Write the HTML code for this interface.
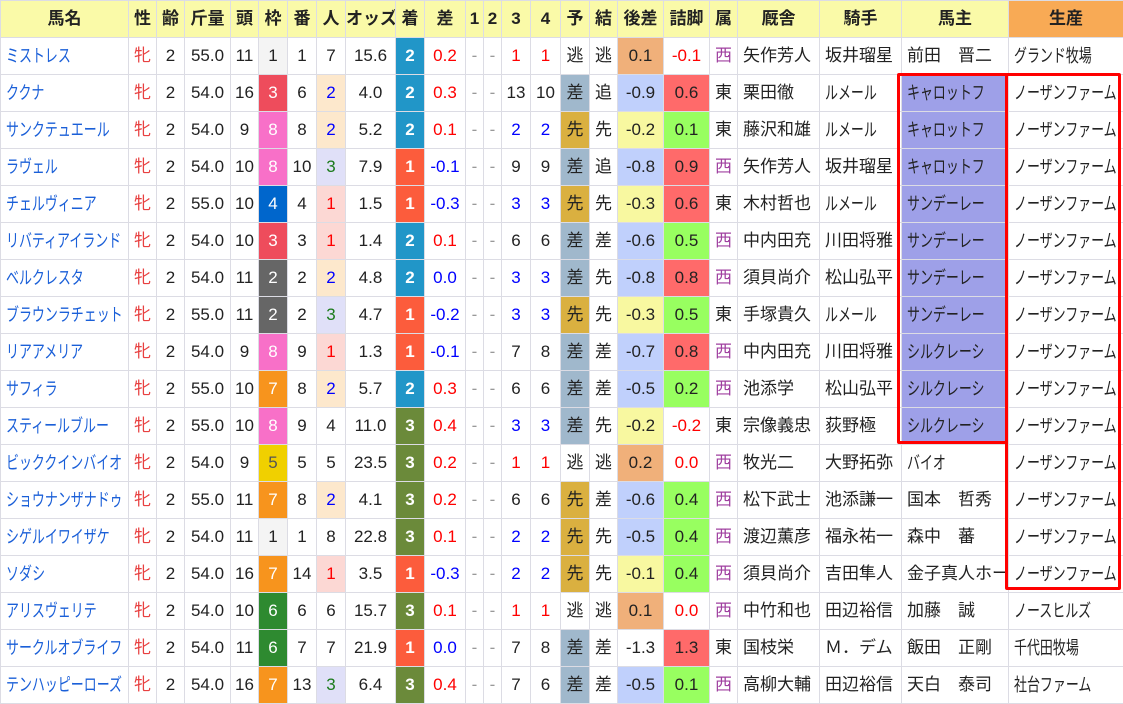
<!DOCTYPE html>
<html><head><meta charset="utf-8"><style>
body{margin:0;background:#fff;width:1123px;height:703px;overflow:hidden;position:relative}
table{border-collapse:collapse;table-layout:fixed;width:1123px;font-family:"Liberation Sans","Noto Sans CJK JP",sans-serif;font-size:17px;color:#222}
td,th{border:1px solid #dcdce4;height:36px;padding:0;text-align:center;white-space:nowrap;overflow:hidden;line-height:20px}
th{background:#fafaa8;font-weight:bold}
th.sp{background:#f8aa55}
td.l{text-align:left;padding-left:5px}
td.n{color:#1a5fd8}
td.l span{display:inline-block;transform:scaleX(.72);transform-origin:0 50%;font-size:18px}
.f{color:#e84040}
.r{color:#f00}.b{color:#00f}.g{color:#1a7a1a}.d{color:#999}
.w1{background:#f4f4f4}.w2{background:#666;color:#fff}.w3{background:#ee4c5c;color:#fff}.w4{background:#0066cc;color:#fff}.w5{background:#f0d000;color:#555}.w6{background:#2e8a30;color:#fff}.w7{background:#f7941d;color:#fff}.w8{background:#f870c8;color:#fff}
.p1{background:#fcd8d4;color:#f00}.p2{background:#fde8cc;color:#00f}.p3{background:#e0e0f8;color:#1a7a1a}
.c1{background:#fc5c3c;color:#fff;font-weight:bold}.c2{background:#2196c8;color:#fff;font-weight:bold}.c3{background:#6b8a3a;color:#fff;font-weight:bold}
.ys{background:#a0b8cc}.ys2{background:#dab040}
.ao{background:#f0b07a}.ab{background:#c0d0fc}.ay{background:#f8f8a0}
.tr{background:#ff6a6a}.tg{background:#98ff60}
.w{color:#a040a0}
.o{background:#9ea0e8}
.box{position:absolute;border:3px solid #f00;box-sizing:border-box;border-radius:2px}
</style></head><body>
<table>
<colgroup><col style="width:128px"><col style="width:28px"><col style="width:28px"><col style="width:46px"><col style="width:28px"><col style="width:29px"><col style="width:29px"><col style="width:29px"><col style="width:50px"><col style="width:29px"><col style="width:41px"><col style="width:18px"><col style="width:18px"><col style="width:29px"><col style="width:30px"><col style="width:29px"><col style="width:28px"><col style="width:46px"><col style="width:46px"><col style="width:28px"><col style="width:82px"><col style="width:82px"><col style="width:107px"><col style="width:115px"></colgroup>
<tr><th>馬名</th><th>性</th><th>齢</th><th>斤量</th><th>頭</th><th>枠</th><th>番</th><th>人</th><th>オッズ</th><th>着</th><th>差</th><th>1</th><th>2</th><th>3</th><th>4</th><th>予</th><th>結</th><th>後差</th><th>詰脚</th><th>属</th><th>厩舎</th><th>騎手</th><th>馬主</th><th class="sp">生産</th></tr>
<tr><td class="l n"><span>ミストレス</span></td><td class="f">牝</td><td>2</td><td>55.0</td><td>11</td><td class="w1">1</td><td>1</td><td>7</td><td>15.6</td><td class="c2">2</td><td class="r">0.2</td><td class="d">-</td><td class="d">-</td><td class="r">1</td><td class="r">1</td><td>逃</td><td>逃</td><td class="ao">0.1</td><td class="r">-0.1</td><td class="w">西</td><td class="l">矢作芳人</td><td class="l">坂井瑠星</td><td class="l">前田　晋二</td><td class="l"><span>グランド牧場</span></td></tr>
<tr><td class="l n"><span>ククナ</span></td><td class="f">牝</td><td>2</td><td>54.0</td><td>16</td><td class="w3">3</td><td>6</td><td class="p2">2</td><td>4.0</td><td class="c2">2</td><td class="r">0.3</td><td class="d">-</td><td class="d">-</td><td>13</td><td>10</td><td class="ys">差</td><td>追</td><td class="ab">-0.9</td><td class="tr">0.6</td><td>東</td><td class="l">栗田徹</td><td class="l"><span>ルメール</span></td><td class="l o"><span>キャロットフ</span></td><td class="l"><span>ノーザンファーム</span></td></tr>
<tr><td class="l n"><span>サンクテュエール</span></td><td class="f">牝</td><td>2</td><td>54.0</td><td>9</td><td class="w8">8</td><td>8</td><td class="p2">2</td><td>5.2</td><td class="c2">2</td><td class="r">0.1</td><td class="d">-</td><td class="d">-</td><td class="b">2</td><td class="b">2</td><td class="ys2">先</td><td>先</td><td class="ay">-0.2</td><td class="tg">0.1</td><td>東</td><td class="l">藤沢和雄</td><td class="l"><span>ルメール</span></td><td class="l o"><span>キャロットフ</span></td><td class="l"><span>ノーザンファーム</span></td></tr>
<tr><td class="l n"><span>ラヴェル</span></td><td class="f">牝</td><td>2</td><td>54.0</td><td>10</td><td class="w8">8</td><td>10</td><td class="p3">3</td><td>7.9</td><td class="c1">1</td><td class="b">-0.1</td><td class="d">-</td><td class="d">-</td><td>9</td><td>9</td><td class="ys">差</td><td>追</td><td class="ab">-0.8</td><td class="tr">0.9</td><td class="w">西</td><td class="l">矢作芳人</td><td class="l">坂井瑠星</td><td class="l o"><span>キャロットフ</span></td><td class="l"><span>ノーザンファーム</span></td></tr>
<tr><td class="l n"><span>チェルヴィニア</span></td><td class="f">牝</td><td>2</td><td>55.0</td><td>10</td><td class="w4">4</td><td>4</td><td class="p1">1</td><td>1.5</td><td class="c1">1</td><td class="b">-0.3</td><td class="d">-</td><td class="d">-</td><td class="b">3</td><td class="b">3</td><td class="ys2">先</td><td>先</td><td class="ay">-0.3</td><td class="tr">0.6</td><td>東</td><td class="l">木村哲也</td><td class="l"><span>ルメール</span></td><td class="l o"><span>サンデーレー</span></td><td class="l"><span>ノーザンファーム</span></td></tr>
<tr><td class="l n"><span>リバティアイランド</span></td><td class="f">牝</td><td>2</td><td>54.0</td><td>10</td><td class="w3">3</td><td>3</td><td class="p1">1</td><td>1.4</td><td class="c2">2</td><td class="r">0.1</td><td class="d">-</td><td class="d">-</td><td>6</td><td>6</td><td class="ys">差</td><td>差</td><td class="ab">-0.6</td><td class="tg">0.5</td><td class="w">西</td><td class="l">中内田充</td><td class="l">川田将雅</td><td class="l o"><span>サンデーレー</span></td><td class="l"><span>ノーザンファーム</span></td></tr>
<tr><td class="l n"><span>ベルクレスタ</span></td><td class="f">牝</td><td>2</td><td>54.0</td><td>11</td><td class="w2">2</td><td>2</td><td class="p2">2</td><td>4.8</td><td class="c2">2</td><td class="b">0.0</td><td class="d">-</td><td class="d">-</td><td class="b">3</td><td class="b">3</td><td class="ys">差</td><td>先</td><td class="ab">-0.8</td><td class="tr">0.8</td><td class="w">西</td><td class="l">須貝尚介</td><td class="l">松山弘平</td><td class="l o"><span>サンデーレー</span></td><td class="l"><span>ノーザンファーム</span></td></tr>
<tr><td class="l n"><span>ブラウンラチェット</span></td><td class="f">牝</td><td>2</td><td>55.0</td><td>11</td><td class="w2">2</td><td>2</td><td class="p3">3</td><td>4.7</td><td class="c1">1</td><td class="b">-0.2</td><td class="d">-</td><td class="d">-</td><td class="b">3</td><td class="b">3</td><td class="ys2">先</td><td>先</td><td class="ay">-0.3</td><td class="tg">0.5</td><td>東</td><td class="l">手塚貴久</td><td class="l"><span>ルメール</span></td><td class="l o"><span>サンデーレー</span></td><td class="l"><span>ノーザンファーム</span></td></tr>
<tr><td class="l n"><span>リアアメリア</span></td><td class="f">牝</td><td>2</td><td>54.0</td><td>9</td><td class="w8">8</td><td>9</td><td class="p1">1</td><td>1.3</td><td class="c1">1</td><td class="b">-0.1</td><td class="d">-</td><td class="d">-</td><td>7</td><td>8</td><td class="ys">差</td><td>差</td><td class="ab">-0.7</td><td class="tr">0.8</td><td class="w">西</td><td class="l">中内田充</td><td class="l">川田将雅</td><td class="l o"><span>シルクレーシ</span></td><td class="l"><span>ノーザンファーム</span></td></tr>
<tr><td class="l n"><span>サフィラ</span></td><td class="f">牝</td><td>2</td><td>55.0</td><td>10</td><td class="w7">7</td><td>8</td><td class="p2">2</td><td>5.7</td><td class="c2">2</td><td class="r">0.3</td><td class="d">-</td><td class="d">-</td><td>6</td><td>6</td><td class="ys">差</td><td>差</td><td class="ab">-0.5</td><td class="tg">0.2</td><td class="w">西</td><td class="l">池添学</td><td class="l">松山弘平</td><td class="l o"><span>シルクレーシ</span></td><td class="l"><span>ノーザンファーム</span></td></tr>
<tr><td class="l n"><span>スティールブルー</span></td><td class="f">牝</td><td>2</td><td>55.0</td><td>10</td><td class="w8">8</td><td>9</td><td>4</td><td>11.0</td><td class="c3">3</td><td class="r">0.4</td><td class="d">-</td><td class="d">-</td><td class="b">3</td><td class="b">3</td><td class="ys">差</td><td>先</td><td class="ay">-0.2</td><td class="r">-0.2</td><td>東</td><td class="l">宗像義忠</td><td class="l">荻野極</td><td class="l o"><span>シルクレーシ</span></td><td class="l"><span>ノーザンファーム</span></td></tr>
<tr><td class="l n"><span>ビッククインバイオ</span></td><td class="f">牝</td><td>2</td><td>54.0</td><td>9</td><td class="w5">5</td><td>5</td><td>5</td><td>23.5</td><td class="c3">3</td><td class="r">0.2</td><td class="d">-</td><td class="d">-</td><td class="r">1</td><td class="r">1</td><td>逃</td><td>逃</td><td class="ao">0.2</td><td class="r">0.0</td><td class="w">西</td><td class="l">牧光二</td><td class="l">大野拓弥</td><td class="l"><span>バイオ</span></td><td class="l"><span>ノーザンファーム</span></td></tr>
<tr><td class="l n"><span>ショウナンザナドゥ</span></td><td class="f">牝</td><td>2</td><td>55.0</td><td>11</td><td class="w7">7</td><td>8</td><td class="p2">2</td><td>4.1</td><td class="c3">3</td><td class="r">0.2</td><td class="d">-</td><td class="d">-</td><td>6</td><td>6</td><td class="ys2">先</td><td>差</td><td class="ab">-0.6</td><td class="tg">0.4</td><td class="w">西</td><td class="l">松下武士</td><td class="l">池添謙一</td><td class="l">国本　哲秀</td><td class="l"><span>ノーザンファーム</span></td></tr>
<tr><td class="l n"><span>シゲルイワイザケ</span></td><td class="f">牝</td><td>2</td><td>54.0</td><td>11</td><td class="w1">1</td><td>1</td><td>8</td><td>22.8</td><td class="c3">3</td><td class="r">0.1</td><td class="d">-</td><td class="d">-</td><td class="b">2</td><td class="b">2</td><td class="ys2">先</td><td>先</td><td class="ab">-0.5</td><td class="tg">0.4</td><td class="w">西</td><td class="l">渡辺薫彦</td><td class="l">福永祐一</td><td class="l">森中　蕃</td><td class="l"><span>ノーザンファーム</span></td></tr>
<tr><td class="l n"><span>ソダシ</span></td><td class="f">牝</td><td>2</td><td>54.0</td><td>16</td><td class="w7">7</td><td>14</td><td class="p1">1</td><td>3.5</td><td class="c1">1</td><td class="b">-0.3</td><td class="d">-</td><td class="d">-</td><td class="b">2</td><td class="b">2</td><td class="ys2">先</td><td>先</td><td class="ay">-0.1</td><td class="tg">0.4</td><td class="w">西</td><td class="l">須貝尚介</td><td class="l">吉田隼人</td><td class="l">金子真人ホー</td><td class="l"><span>ノーザンファーム</span></td></tr>
<tr><td class="l n"><span>アリスヴェリテ</span></td><td class="f">牝</td><td>2</td><td>54.0</td><td>10</td><td class="w6">6</td><td>6</td><td>6</td><td>15.7</td><td class="c3">3</td><td class="r">0.1</td><td class="d">-</td><td class="d">-</td><td class="r">1</td><td class="r">1</td><td>逃</td><td>逃</td><td class="ao">0.1</td><td class="r">0.0</td><td class="w">西</td><td class="l">中竹和也</td><td class="l">田辺裕信</td><td class="l">加藤　誠</td><td class="l"><span>ノースヒルズ</span></td></tr>
<tr><td class="l n"><span>サークルオブライフ</span></td><td class="f">牝</td><td>2</td><td>54.0</td><td>11</td><td class="w6">6</td><td>7</td><td>7</td><td>21.9</td><td class="c1">1</td><td class="b">0.0</td><td class="d">-</td><td class="d">-</td><td>7</td><td>8</td><td class="ys">差</td><td>差</td><td>-1.3</td><td class="tr">1.3</td><td>東</td><td class="l">国枝栄</td><td class="l">Ｍ．デム</td><td class="l">飯田　正剛</td><td class="l"><span>千代田牧場</span></td></tr>
<tr><td class="l n"><span>テンハッピーローズ</span></td><td class="f">牝</td><td>2</td><td>54.0</td><td>16</td><td class="w7">7</td><td>13</td><td class="p3">3</td><td>6.4</td><td class="c3">3</td><td class="r">0.4</td><td class="d">-</td><td class="d">-</td><td>7</td><td>6</td><td class="ys">差</td><td>差</td><td class="ab">-0.5</td><td class="tg">0.1</td><td class="w">西</td><td class="l">高柳大輔</td><td class="l">田辺裕信</td><td class="l">天白　泰司</td><td class="l"><span>社台ファーム</span></td></tr>
</table>
<div class="box" style="left:897px;top:73px;width:111px;height:371px"></div>
<div class="box" style="left:1005px;top:73px;width:116px;height:517px"></div>
</body></html>
